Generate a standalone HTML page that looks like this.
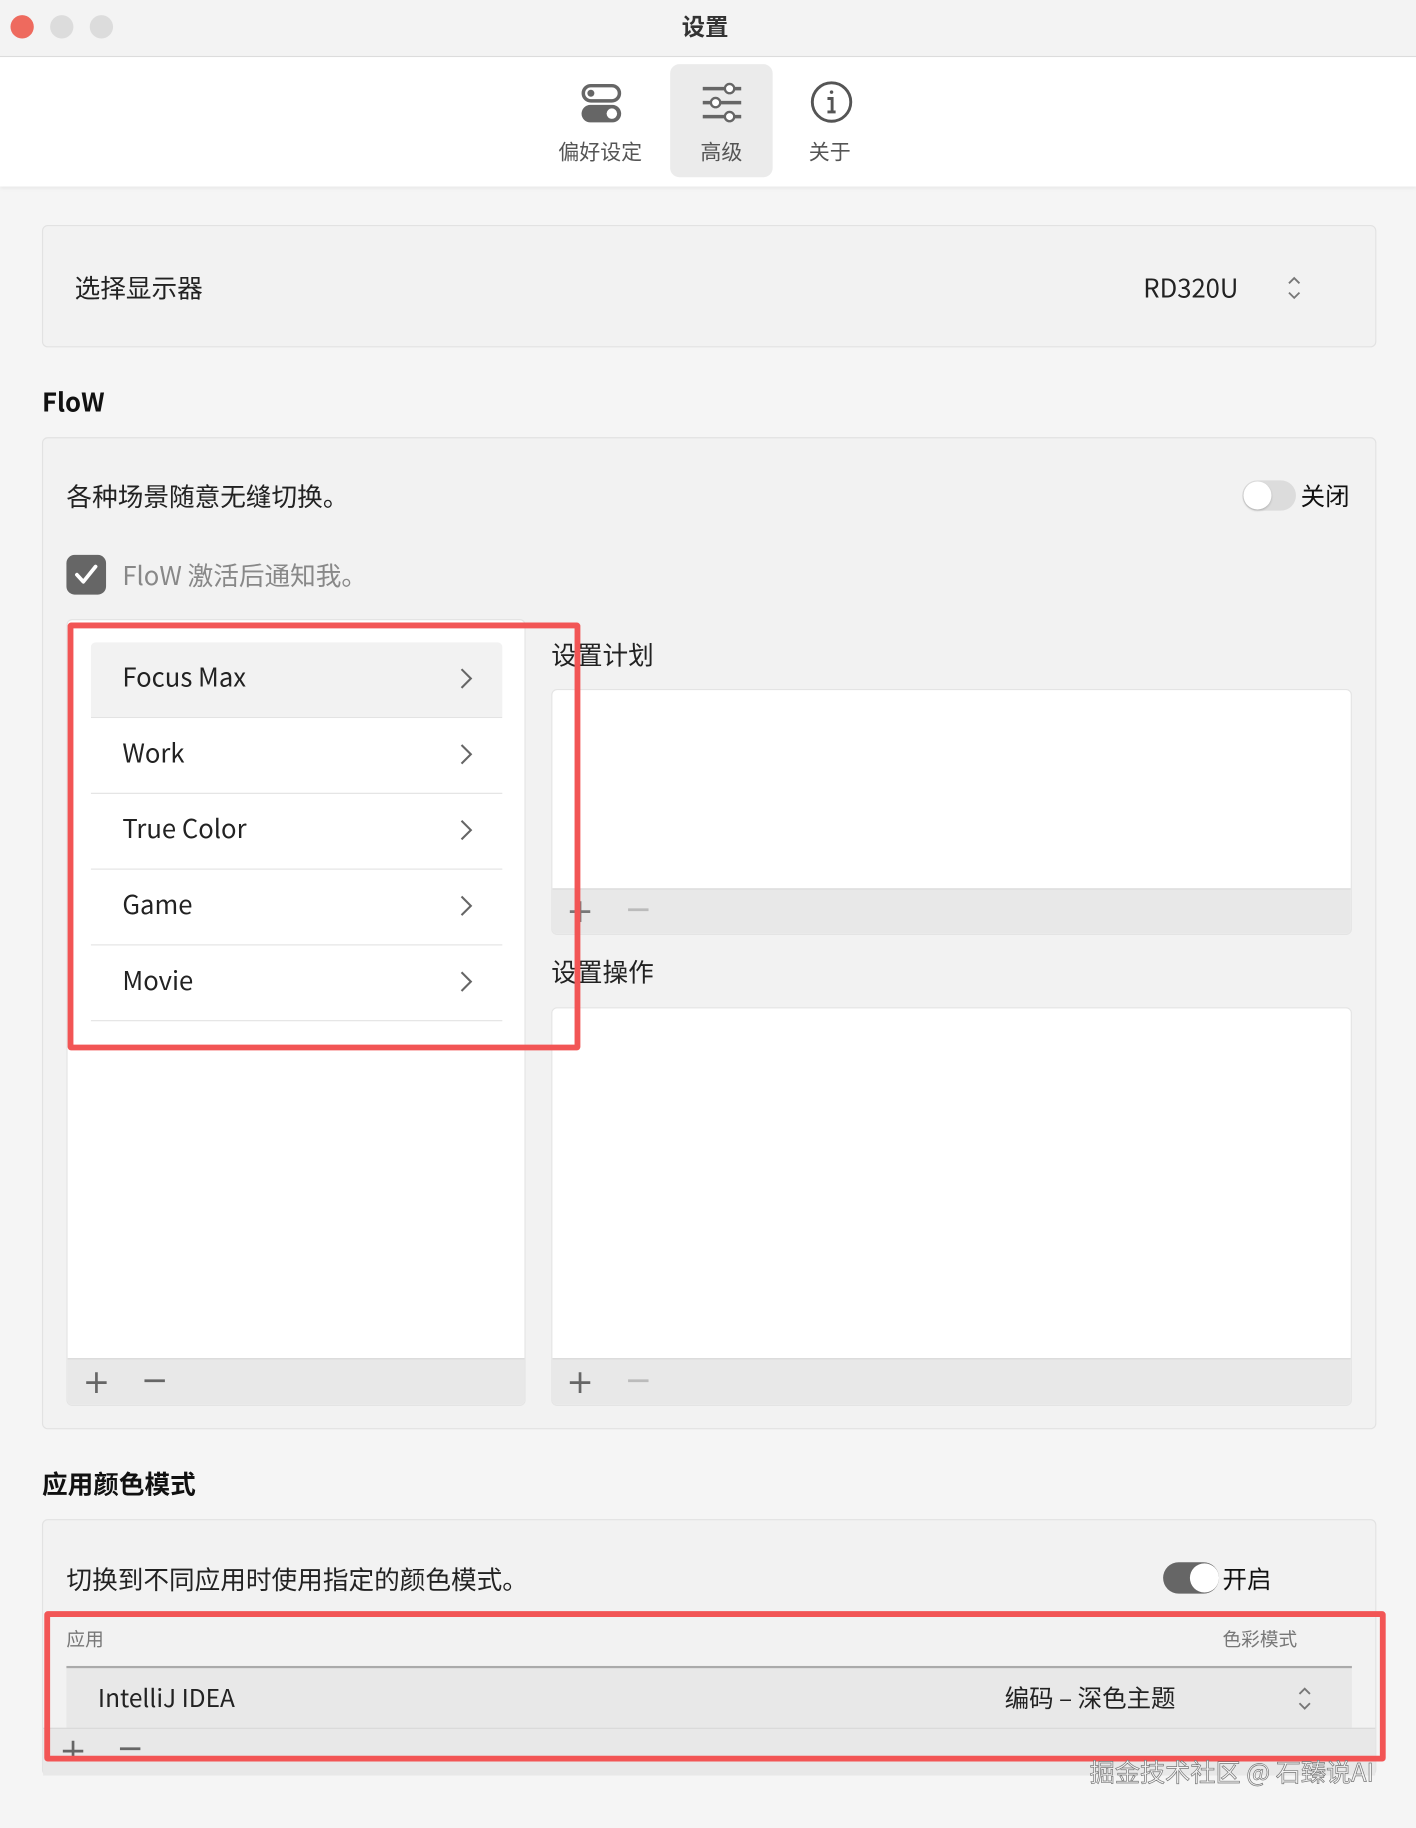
<!DOCTYPE html>
<html><head><meta charset="utf-8"><style>
html,body{margin:0;padding:0;background:#f5f5f5;overflow:hidden}
body{width:1416px;height:1828px}
#s{position:absolute;left:0;top:0;width:1215px;height:1568px;transform:scale(1.16543,1.16582);transform-origin:0 0;background:#f5f5f5;font-family:"Liberation Sans","Noto Sans CJK SC",sans-serif;color:#222}
.a{position:absolute}
.t{position:absolute;white-space:nowrap;font-family:"Noto Sans CJK SC","Liberation Sans",sans-serif;line-height:1}
.box{position:absolute;background:#f2f2f2;border:1px solid #e2e2e2;border-radius:5px;box-sizing:border-box}
.dot{position:absolute;top:13px;width:20px;height:20px;border-radius:50%}
.row{position:absolute;left:20px;width:353px;height:65px;border-bottom:1.5px solid #e3e3e3;box-sizing:border-box}
.row span{position:absolute;left:27px;top:18px;font-size:22px;font-family:"Noto Sans CJK SC",sans-serif;line-height:1;color:#222}
.row svg{position:absolute;left:316px;top:21px}
.bar{position:absolute;background:#e8e8e8;border-top:1px solid #d8d8d8}
.pm{position:absolute;font-size:28px;line-height:1;color:#666;font-family:"DejaVu Sans",sans-serif}
.red{position:absolute;border:5px solid #f25555;border-radius:3px;box-sizing:border-box}
</style></head><body><div id="s">
<div class="a" style="left:0;top:0;width:1215px;height:48px;background:#f3f3f3;border-bottom:1px solid #dcdcdc"></div>
<div class="dot" style="left:9px;background:#ee6a5e"></div>
<div class="dot" style="left:43px;background:#dcdcdc"></div>
<div class="dot" style="left:77px;background:#dcdcdc"></div>
<div class="t" style="left:585px;top:12px;font-size:20px;font-weight:bold;color:#333">设置</div>
<div class="a" style="left:0;top:49px;width:1215px;height:111px;background:#fff;box-shadow:0 2px 3px rgba(0,0,0,0.05)"></div>
<div class="a" style="left:575px;top:55px;width:88px;height:97px;background:#ebebeb;border-radius:8px"></div>
<svg class="a" style="left:498px;top:71px" width="36" height="36" viewBox="0 0 36 36"><rect x="2.5" y="2.5" width="31" height="13" rx="6.5" fill="none" stroke="#666" stroke-width="3"/><circle cx="9" cy="9" r="3" fill="#666"/><rect x="1" y="19" width="34" height="15" rx="7.5" fill="#666"/><circle cx="27" cy="26.5" r="4.5" fill="#fff"/></svg>
<svg class="a" style="left:602px;top:70px" width="36" height="36" viewBox="0 0 36 36" fill="none" stroke="#666" stroke-width="3"><path d="M1 6H34M1 18H34M1 30H34"/><circle cx="24" cy="6" r="4" fill="#fff" stroke-width="2"/><circle cx="12" cy="18" r="4" fill="#fff" stroke-width="2"/><circle cx="24" cy="30" r="4" fill="#fff" stroke-width="2"/></svg>
<svg class="a" style="left:695px;top:69px" width="37" height="37" viewBox="0 0 37 37" fill="none" stroke="#555" stroke-width="2.5"><circle cx="18.5" cy="18.5" r="16.5"/><circle cx="18.5" cy="10" r="1.5" fill="#555" stroke="none"/><path d="M15 15.5H19V27M15 27H22"/></svg>
<div class="t" style="left:479px;top:121px;font-size:18px;color:#555">偏好设定</div>
<div class="t" style="left:601px;top:121px;font-size:18px;color:#555">高级</div>
<div class="t" style="left:694px;top:121px;font-size:18px;color:#555">关于</div>
<div class="box" style="left:36px;top:193px;width:1145px;height:105px"></div>
<div class="t" style="left:64px;top:235px;font-size:22px">选择显示器</div>
<div class="t" style="left:981px;top:235px;font-size:22px">RD320U</div>
<svg class="a" style="left:1104px;top:236px" width="13" height="22" viewBox="0 0 13 22" fill="none" stroke="#777" stroke-width="1.6"><path d="M2 7L6.5 2.5L11 7M2 15L6.5 19.5L11 15"/></svg>
<div class="t" style="left:36px;top:333px;font-size:22px;font-weight:bold;color:#111">FloW</div>
<div class="box" style="left:36px;top:375px;width:1145px;height:851px"></div>
<div class="t" style="left:57px;top:414px;font-size:22px">各种场景随意无缝切换。</div>
<div class="a" style="left:1066px;top:412px;width:46px;height:26px;border-radius:13px;background:#dcdcdc"></div>
<div class="a" style="left:1067px;top:413px;width:24px;height:24px;border-radius:50%;background:#fff;box-shadow:0 1px 2px rgba(0,0,0,.2)"></div>
<div class="t" style="left:1116px;top:415px;font-size:21px;color:#111">关闭</div>
<div class="a" style="left:57px;top:476px;width:34px;height:34px;border-radius:7px;background:#666"></div>
<svg class="a" style="left:63px;top:483px" width="22" height="20" viewBox="0 0 22 20" fill="none" stroke="#fff" stroke-width="3.2" stroke-linecap="round" stroke-linejoin="round"><path d="M3 10L8.5 16L19 3"/></svg>
<div class="t" style="left:105px;top:482px;font-size:22px;color:#888">FloW 激活后通知我。</div>
<div class="a" style="left:57px;top:531px;width:394px;height:675px;background:#fff;border:1px solid #e4e4e4;border-radius:5px;box-sizing:border-box;overflow:hidden">
 <div class="row" style="top:19px;background:#f2f2f2;border-radius:4px 4px 0 0"><span>Focus Max</span><svg width="12" height="20" viewBox="0 0 12 20" fill="none" stroke="#666" stroke-width="1.8"><path d="M2 2L10 10L2 18"/></svg></div>
 <div class="row" style="top:84px"><span>Work</span><svg width="12" height="20" viewBox="0 0 12 20" fill="none" stroke="#666" stroke-width="1.8"><path d="M2 2L10 10L2 18"/></svg></div>
 <div class="row" style="top:149px"><span>True Color</span><svg width="12" height="20" viewBox="0 0 12 20" fill="none" stroke="#666" stroke-width="1.8"><path d="M2 2L10 10L2 18"/></svg></div>
 <div class="row" style="top:214px"><span>Game</span><svg width="12" height="20" viewBox="0 0 12 20" fill="none" stroke="#666" stroke-width="1.8"><path d="M2 2L10 10L2 18"/></svg></div>
 <div class="row" style="top:279px"><span>Movie</span><svg width="12" height="20" viewBox="0 0 12 20" fill="none" stroke="#666" stroke-width="1.8"><path d="M2 2L10 10L2 18"/></svg></div>
 <div class="bar" style="left:0;top:633px;width:394px;height:42px"></div>
 <div class="pm" style="left:13px;top:640px">+</div><div class="pm" style="left:63px;top:638px">−</div>
</div>
<div class="t" style="left:473px;top:550px;font-size:22px">设置计划</div>
<div class="a" style="left:473px;top:591px;width:687px;height:211px;background:#fff;border:1px solid #e4e4e4;border-radius:5px;box-sizing:border-box;overflow:hidden">
 <div class="bar" style="left:0;top:170px;width:687px;height:41px"></div>
 <div class="pm" style="left:12px;top:176px;color:#777">+</div><div class="pm" style="left:62px;top:174px;color:#bbb">−</div>
</div>
<div class="t" style="left:473px;top:822px;font-size:22px">设置操作</div>
<div class="a" style="left:473px;top:864px;width:687px;height:342px;background:#fff;border:1px solid #e4e4e4;border-radius:5px;box-sizing:border-box;overflow:hidden">
 <div class="bar" style="left:0;top:300px;width:687px;height:42px"></div>
 <div class="pm" style="left:12px;top:307px">+</div><div class="pm" style="left:62px;top:305px;color:#bbb">−</div>
</div>
<div class="red" style="left:58px;top:534px;width:440px;height:367px"></div>
<div class="t" style="left:36px;top:1261px;font-size:22px;font-weight:bold;color:#111">应用颜色模式</div>
<div class="box" style="left:36px;top:1303px;width:1145px;height:220px"></div>
<div class="t" style="left:57px;top:1343px;font-size:22px">切换到不同应用时使用指定的颜色模式。</div>
<div class="a" style="left:998px;top:1340px;width:48px;height:27px;border-radius:14px;background:#666"></div>
<div class="a" style="left:1021px;top:1341px;width:25px;height:25px;border-radius:50%;background:#fff"></div>
<div class="t" style="left:1049px;top:1344px;font-size:21px;color:#111">开启</div>
<div class="t" style="left:57px;top:1397px;font-size:16px;color:#777">应用</div>
<div class="t" style="left:1049px;top:1397px;font-size:16px;color:#777">色彩模式</div>
<div class="a" style="left:57px;top:1429px;width:1103px;height:2px;background:#aaa"></div>
<div class="a" style="left:57px;top:1431px;width:1103px;height:51px;background:#e8e8e8"></div>
<div class="t" style="left:84px;top:1446px;font-size:21px">IntelliJ IDEA</div>
<div class="t" style="left:862px;top:1446px;font-size:21px">编码 – 深色主题</div>
<svg class="a" style="left:1113px;top:1446px" width="13" height="22" viewBox="0 0 13 22" fill="none" stroke="#777" stroke-width="1.6"><path d="M2 7L6.5 2.5L11 7M2 15L6.5 19.5L11 15"/></svg>
<div class="a" style="left:37px;top:1482px;width:1143px;height:40px;background:#e8e8e8;border-top:1px solid #d8d8d8"></div>
<div class="pm" style="left:51px;top:1488px">+</div><div class="pm" style="left:100px;top:1486px">−</div>
<div class="red" style="left:38px;top:1382px;width:1151px;height:129px"></div>
<div class="t" style="left:935px;top:1509px;font-size:21.6px;color:#f4f4f4;-webkit-text-stroke:0.6px #777">掘金技术社区 @ 石臻说AI</div>
</div></body></html>
